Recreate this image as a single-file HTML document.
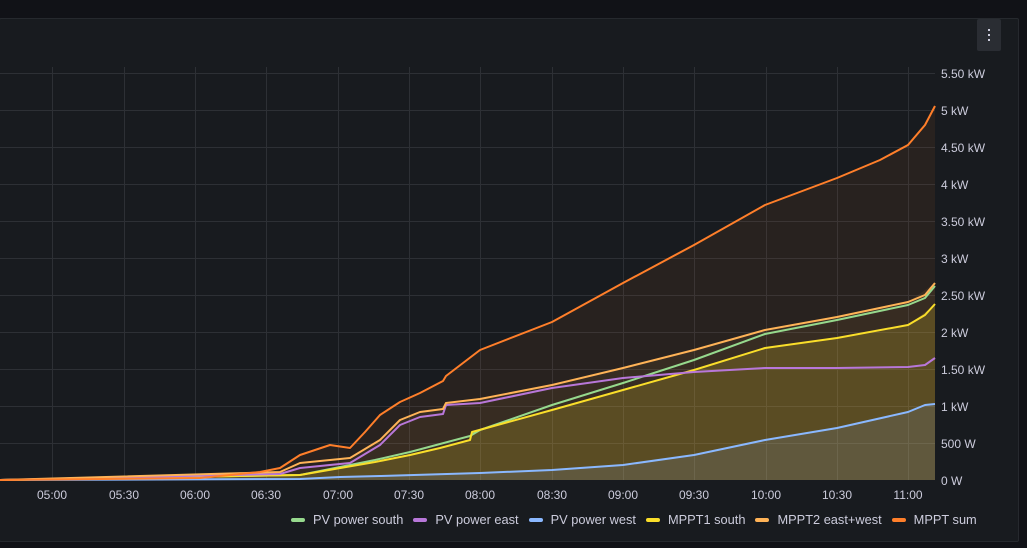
<!DOCTYPE html>
<html><head><meta charset="utf-8"><style>
html,body{margin:0;padding:0;background:#111217;width:1027px;height:548px;overflow:hidden;font-family:"Liberation Sans",sans-serif}
.panel{position:absolute;left:-1px;top:18px;width:1018px;height:522px;background:#181b1f;border:1px solid #26292e;border-radius:2px}
.menu{position:absolute;left:977px;top:19px;width:24px;height:32px;background:#2a2d33;border-radius:2px}
.menu i{position:absolute;left:11px;width:2px;height:2px;background:#ccccdc}
.legend{position:absolute;top:512px;left:291px;font-size:12.8px;color:#ccccdc;white-space:nowrap}
.legend span{margin-right:10px}
.legend b{display:inline-block;width:14px;height:4px;border-radius:2px;margin-right:8px;vertical-align:middle;position:relative;top:-1px}
</style></head><body>
<div class="panel"></div>
<div class="menu"><i style="top:10px"></i><i style="top:15px"></i><i style="top:20px"></i></div>
<svg width="1027" height="548" style="position:absolute;left:0;top:0" font-family="Liberation Sans, sans-serif" font-size="12" fill="#ccccdc">
<g stroke="#2d3035" stroke-width="1">
<line x1="0" x2="935" y1="73.5" y2="73.5"/><line x1="0" x2="935" y1="110.5" y2="110.5"/><line x1="0" x2="935" y1="147.5" y2="147.5"/><line x1="0" x2="935" y1="184.5" y2="184.5"/><line x1="0" x2="935" y1="221.5" y2="221.5"/><line x1="0" x2="935" y1="258.5" y2="258.5"/><line x1="0" x2="935" y1="295.5" y2="295.5"/><line x1="0" x2="935" y1="332.5" y2="332.5"/><line x1="0" x2="935" y1="369.5" y2="369.5"/><line x1="0" x2="935" y1="406.5" y2="406.5"/><line x1="0" x2="935" y1="443.5" y2="443.5"/>
<line x1="52.5" x2="52.5" y1="67" y2="480"/><line x1="124.5" x2="124.5" y1="67" y2="480"/><line x1="195.5" x2="195.5" y1="67" y2="480"/><line x1="266.5" x2="266.5" y1="67" y2="480"/><line x1="338.5" x2="338.5" y1="67" y2="480"/><line x1="409.5" x2="409.5" y1="67" y2="480"/><line x1="480.5" x2="480.5" y1="67" y2="480"/><line x1="552.5" x2="552.5" y1="67" y2="480"/><line x1="623.5" x2="623.5" y1="67" y2="480"/><line x1="694.5" x2="694.5" y1="67" y2="480"/><line x1="766.5" x2="766.5" y1="67" y2="480"/><line x1="837.5" x2="837.5" y1="67" y2="480"/><line x1="908.5" x2="908.5" y1="67" y2="480"/>
</g>
<g stroke="none">
<path fill="#ff7f2a" fill-opacity="0.07" d="M0,480 L200,478 L280,468 L300,455 L330,445 L350,450 L380,415 L420,393 L443,381 L446,376 L480,350 L552,322 L623,283 L694,245 L765,205 L837,178 L880,160 L908,145 L925,125 L935,106 L935,480Z"/>
<path fill="#ffb357" fill-opacity="0.07" d="M0,480 L280,472 L350,460 L380,440 L400,420 L420,412 L445,408 L480,400 L552,385 L623,368 L694,350 L765,330 L837,317 L908,302 L935,283 L935,480Z"/>
<path fill="#fade2a" fill-opacity="0.18" d="M0,480 L300,475 L375,462 L410,455 L440,448 L470,440 L472,432 L552,410 L623,390 L694,370 L765,348 L837,338 L908,325 L935,305 L935,480Z"/>
<path fill="#8ab8ff" fill-opacity="0.12" d="M0,480 L340,477 L480,473 L552,470 L623,465 L694,455 L765,440 L837,428 L908,412 L925,405 L935,404 L935,480Z"/>
</g>
<g fill="none" stroke-width="2" stroke-linejoin="round">
<polyline stroke="#8ab8ff" points="0,480 300,479 340,477 380,476 480,473 552,470 623,465 694,455 765,440 837,428 908,412 925,405 935,404"/>
<polyline stroke="#96d98d" points="0,480 300,475 375,460 410,452 440,444 470,436 480,430 552,405 623,383 694,360 765,334 837,320 908,305 925,298 935,286"/>
<polyline stroke="#fade2a" points="0,480 300,475 375,462 410,455 440,448 470,440 472,432 552,410 623,390 694,370 765,348 837,338 908,325 925,315 935,304"/>
<polyline stroke="#b877d9" points="0,480 280,474 300,468 330,465 350,463 380,445 400,425 420,417 443,414 446,405 480,403 552,388 623,378 694,372 765,368 837,368 908,367 925,365 935,358"/>
<polyline stroke="#ffb357" points="0,480 280,472 300,463 330,460 350,458 380,440 400,420 420,412 443,409 446,403 480,399 552,385 623,368 694,350 765,330 837,317 908,302 925,295 935,283"/>
<polyline stroke="#ff7f2a" points="0,480 200,478 260,472 280,468 300,455 330,445 350,448 365,432 380,415 400,402 420,393 443,381 446,376 480,350 552,322 623,283 694,245 765,205 837,178 880,160 908,145 925,125 935,106"/>
</g>
<g text-anchor="start">
<text x="941" y="78">5.50 kW</text><text x="941" y="115">5 kW</text><text x="941" y="152">4.50 kW</text><text x="941" y="189">4 kW</text><text x="941" y="226">3.50 kW</text><text x="941" y="263">3 kW</text><text x="941" y="300">2.50 kW</text><text x="941" y="337">2 kW</text><text x="941" y="374">1.50 kW</text><text x="941" y="411">1 kW</text><text x="941" y="448">500 W</text><text x="941" y="485">0 W</text>
</g>
<g text-anchor="middle">
<text x="52" y="499">05:00</text><text x="124" y="499">05:30</text><text x="195" y="499">06:00</text><text x="266" y="499">06:30</text><text x="338" y="499">07:00</text><text x="409" y="499">07:30</text><text x="480" y="499">08:00</text><text x="552" y="499">08:30</text><text x="623" y="499">09:00</text><text x="694" y="499">09:30</text><text x="766" y="499">10:00</text><text x="837" y="499">10:30</text><text x="908" y="499">11:00</text>
</g>
</svg>
<div class="legend"><span><b style="background:#96d98d"></b>PV power south</span><span><b style="background:#b877d9"></b>PV power east</span><span><b style="background:#8ab8ff"></b>PV power west</span><span><b style="background:#fade2a"></b>MPPT1 south</span><span><b style="background:#ffb357"></b>MPPT2 east+west</span><span><b style="background:#ff7f2a"></b>MPPT sum</span></div>
</body></html>
